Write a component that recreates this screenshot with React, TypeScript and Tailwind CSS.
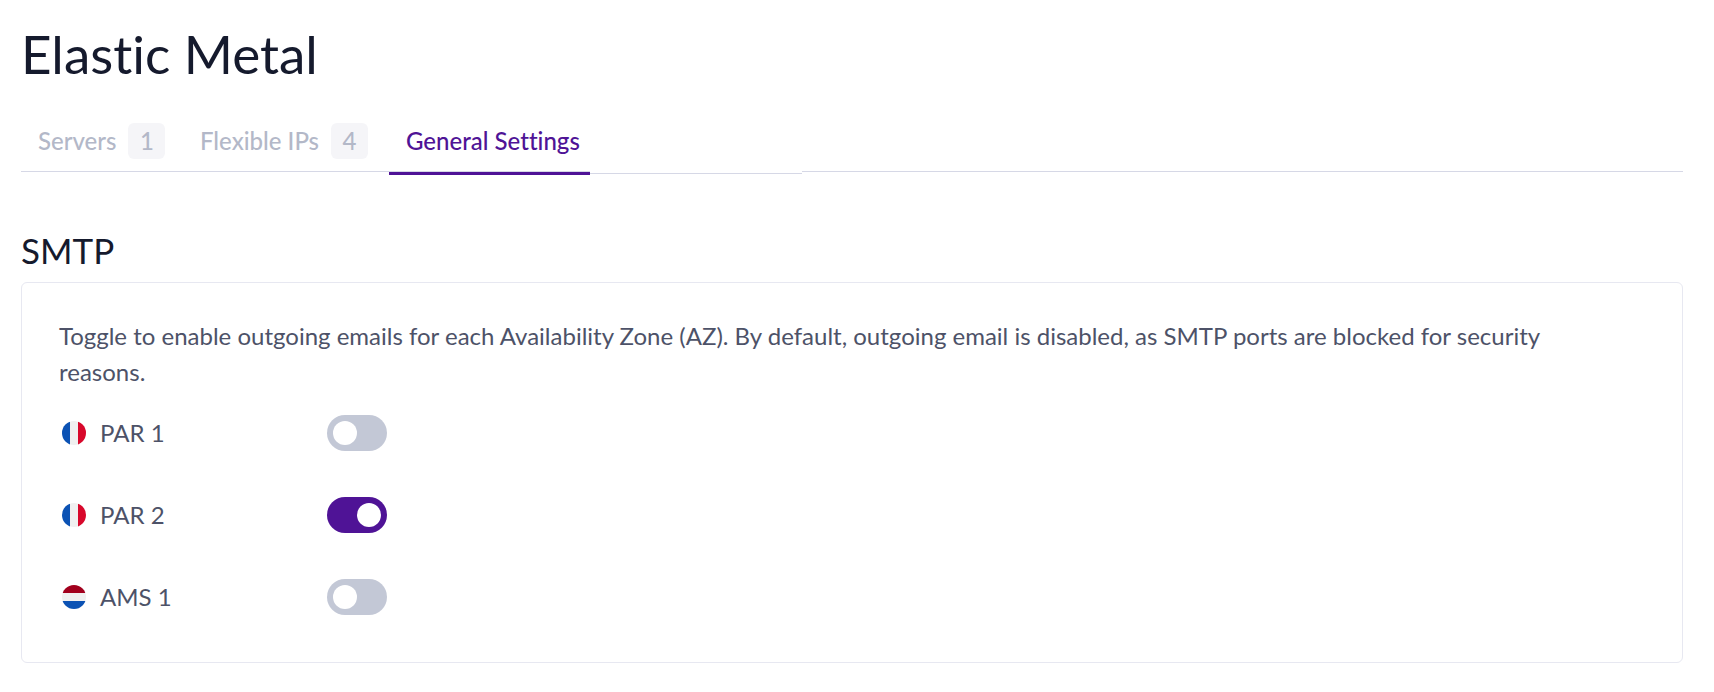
import { useState } from 'react';

type Tab = { id: string; label: string; count?: number; width: string };

const tabs: Tab[] = [
  { id: 'servers', label: 'Servers', count: 1, width: 'w-[162px]' },
  { id: 'ips', label: 'Flexible IPs', count: 4, width: 'w-[206px]' },
  { id: 'settings', label: 'General Settings', width: 'w-[201px]' },
];

type Zone = { id: string; label: string; flag: 'fr' | 'nl'; enabled: boolean };

const initialZones: Zone[] = [
  { id: 'par-1', label: 'PAR 1', flag: 'fr', enabled: false },
  { id: 'par-2', label: 'PAR 2', flag: 'fr', enabled: true },
  { id: 'ams-1', label: 'AMS 1', flag: 'nl', enabled: false },
];

function Flag({ country }: { country: Zone['flag'] }) {
  return (
    <svg viewBox="0 0 24 24" className="size-6 shrink-0" aria-hidden="true">
      <clipPath id={`flag-${country}`}>
        <circle cx="12" cy="12" r="12" />
      </clipPath>
      <g clipPath={`url(#flag-${country})`}>
        <rect width="24" height="24" fill="#f0f0f0" />
        {country === 'fr' ? (
          <>
            <rect width="8" height="24" fill="#0b52b4" />
            <rect x="16" width="8" height="24" fill="#d8082b" />
          </>
        ) : (
          <>
            <rect width="24" height="8" fill="#a2001d" />
            <rect y="16" width="24" height="8" fill="#0b52b4" />
          </>
        )}
      </g>
    </svg>
  );
}

export default function App() {
  const [active, setActive] = useState('settings');
  const [zones, setZones] = useState(initialZones);

  const toggle = (id: string) =>
    setZones((current) => current.map((z) => (z.id === id ? { ...z, enabled: !z.enabled } : z)));

  return (
    <main className="bg-white pt-[22px] pr-[31px] pb-7 pl-[21px] font-['Lato',sans-serif] text-[24px] leading-9 text-[#4d5268] [font-variant-ligatures:none]">
      <h1 className="text-[53px] leading-[64px] text-[#151a2d]">Elastic Metal</h1>

      <div className="mt-[26px] flex items-start" role="tablist">
        {tabs.map((tab) => {
          const selected = tab.id === active;
          return (
            <button
              key={tab.id}
              type="button"
              role="tab"
              aria-selected={selected}
              onClick={() => setActive(tab.id)}
              className={`flex shrink-0 items-center gap-3 pt-[11px] pl-[17px] font-medium whitespace-nowrap ${tab.width} ${
                selected
                  ? 'border-b-[3px] border-[#4f1396] pb-[13px] text-[#4f1396] shadow-[inset_0_-1px_0_#d6d8e6]'
                  : 'border-b border-[#d6d8e6] pb-3 text-[#b3b8c8]'
              }`}
            >
              {tab.label}
              {tab.count !== undefined && (
                <span className="w-[37px] rounded-md bg-[#f5f5f8] text-center">{tab.count}</span>
              )}
            </button>
          );
        })}
        <div className="h-[62px] w-[212px] border-b border-[#d6d8e6]" />
        <div className="h-[60px] flex-1 border-b border-[#d6d8e6]" />
      </div>

      <section className="mt-[53px]">
        <h2 className="text-[35px] leading-[44px] text-[#151a2d]">SMTP</h2>
        <div className="mt-[10px] rounded-md border border-[#e7e8f1] px-[37px] pt-[35px] pb-[47px]">
          <p className="pr-12">
            Toggle to enable outgoing emails for each Availability Zone (AZ). By default, outgoing email is
            disabled, as SMTP ports are blocked for security reasons.
          </p>
          <ul className="mt-[25px] flex flex-col gap-[46px]">
            {zones.map((zone) => (
              <li key={zone.id} className="flex items-center pl-[3px]">
                <label htmlFor={zone.id} className="flex w-[265px] items-center gap-[14px]">
                  <Flag country={zone.flag} />
                  {zone.label}
                </label>
                <input
                  id={zone.id}
                  type="checkbox"
                  role="switch"
                  checked={zone.enabled}
                  onChange={() => toggle(zone.id)}
                  className="h-9 w-[60px] cursor-pointer appearance-none rounded-full bg-[#c3c8d6] p-1.5 before:block before:size-6 before:rounded-full before:bg-white checked:bg-[#4f1396] checked:before:ml-6"
                />
              </li>
            ))}
          </ul>
        </div>
      </section>
    </main>
  );
}
